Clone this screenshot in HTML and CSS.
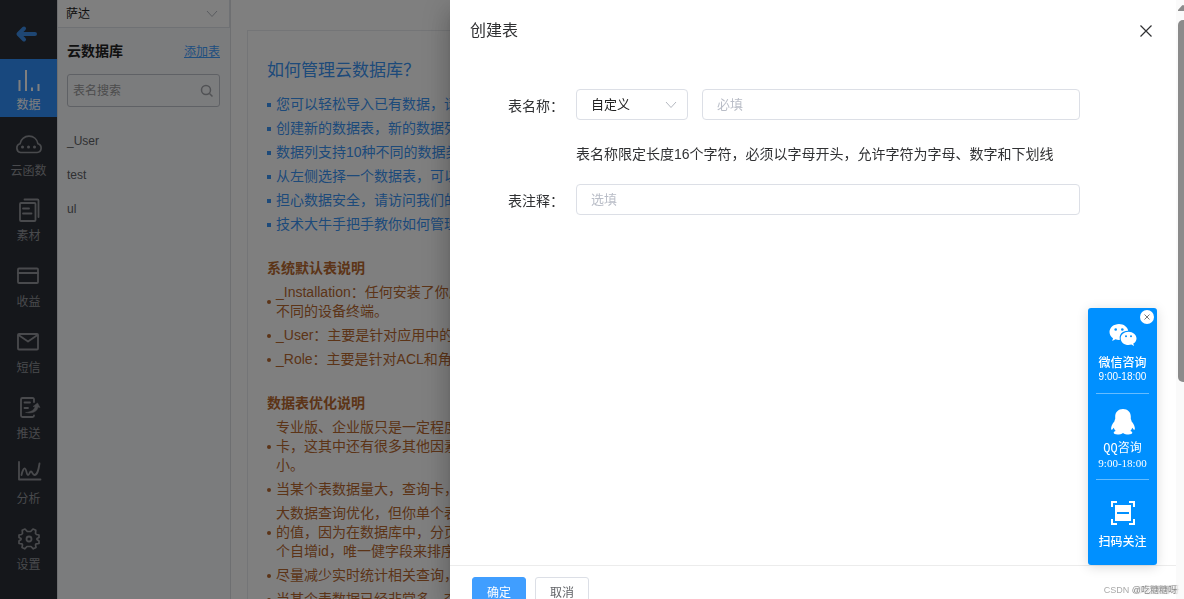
FILE: index.html
```
<!DOCTYPE html>
<html lang="zh-CN">
<head>
<meta charset="utf-8">
<title>云数据库</title>
<link rel="stylesheet" href="styles.css">
</head>
<body>
<div class="app">
  <nav class="rail">
    <button class="back" type="button" aria-label="返回">
      <svg width="57" height="24" viewBox="0 0 57 24"><path d="M35 12H19M24 6.500L18.500 12L24 17.500" stroke-width="4"/></svg>
    </button>
    <div class="rail-list">
      <a class="rail-item active" href="#"><svg width="57" height="24" viewBox="0 0 57 24"><path d="M19.500 11V22M26 1V22M32 18.500V22M38.500 15V22" stroke-width="2" stroke-linecap="butt"/></svg><span>数据</span></a>
      <a class="rail-item" href="#"><svg width="57" height="24" viewBox="0 0 57 24"><path d="M20.500 17.500A4.500 4.500 0 0 1 20 8.800C20.600 4.500 24.500 1.200 29 1.200C33.600 1.200 37.200 4.300 37.900 8.700A4.500 4.500 0 0 1 37 17.500Z" stroke-width="1.700"/><path d="M22.500 12h.01M28.500 12h.01M34.500 12h.01" stroke-width="3"/></svg><span>云函数</span></a>
      <a class="rail-item" href="#"><svg width="57" height="24" viewBox="0 0 57 24"><rect x="20" y="3" width="15.500" height="18" rx="1"/><path d="M24.500 -.500H37.500Q38.500 -.500 38.500 .500V17M23 8.500H29M23 13.500H31.500"/></svg><span>素材</span></a>
      <a class="rail-item" href="#"><svg width="57" height="24" viewBox="0 0 57 24"><rect x="18" y="2.500" width="20" height="14.500" rx="1"/><path d="M18 7H38" stroke-width="2"/></svg><span>收益</span></a>
      <a class="rail-item" href="#"><svg width="57" height="24" viewBox="0 0 57 24"><rect x="18" y="2" width="20" height="15.500" rx="1"/><path d="M18.500 3L28 9.500L37.500 3"/></svg><span>短信</span></a>
      <a class="rail-item" href="#"><svg width="57" height="24" viewBox="0 0 57 24"><path d="M34 4V1.500Q34 0 32.500 0H22.500Q21 0 21 1.500V17.500Q21 19 22.500 19H32.500Q34 19 34 17.500M24.500 4.500H30M24.500 10H28"/><path class="solid" d="M26 14.500C31 14 34.500 12 35 8.500L33 8.500L37.500 5L40 9.500L38 9C37.500 13.500 32 16 26 14.500Z" stroke-width=".500"/></svg><span>推送</span></a>
      <a class="rail-item" href="#"><svg width="57" height="24" viewBox="0 0 57 24"><path d="M19 -1V16.500H40.500M21.500 12C22.500 7 24 5 25 5.500C26.500 6 26.500 12 28 12C29.500 12 29.500 8.500 31 8.500C32.500 8.500 32.500 12 34.500 12C37.500 12 38.500 7 39.500 .500"/></svg><span>分析</span></a>
      <a class="rail-item" href="#"><svg width="57" height="24" viewBox="0 0 57 24"><path d="M27.300 2.500L30.700 2.500L33 0L35.800 1.200L35.500 4.500L36.500 5.500L39 6L39 8.500L37 9.500L37 10.500L39 12L39 14.500L36 14.800L35.500 15.800L36 18.500L33.300 19.800L31 17.500H27L24.700 19.800L22 18.500L22.500 15.800L22 14.800L19 14.500L19 12L21 10.500V9.500L19 8.500V6L21.500 5.500L22.500 4.500L22.200 1.200L25 0Z" stroke-width="1.700"/><circle cx="29" cy="10" r="2.500"/></svg><span>设置</span></a>
    </div>
  </nav>

  <aside class="tables">
    <div class="app-picker">
      <select aria-label="应用"><option>萨达</option></select>
      <svg class="chevron" width="12" height="8" viewBox="0 0 12 8"><path d="M1 1L6 6.500L11 1"/></svg>
    </div>
    <div class="tables-head"><h2>云数据库</h2><a href="#">添加表</a></div>
    <div class="search">
      <input type="text" placeholder="表名搜索" aria-label="表名搜索">
      <svg width="14" height="14" viewBox="0 0 14 14"><circle cx="6" cy="6" r="4.500"/><path d="M9.500 9.500L12.500 12.500"/></svg>
    </div>
    <ul class="table-list"><li>_User</li><li>test</li><li>ul</li></ul>
  </aside>

  <main class="content">
    <article class="card">
      <h1>如何管理云数据库？</h1>
      <ul class="tips">
        <li><span>您可以轻松导入已有数据，请</span></li>
        <li><span>创建新的数据表，新的数据列</span></li>
        <li><span>数据列支持10种不同的数据类</span></li>
        <li><span>从左侧选择一个数据表，可以</span></li>
        <li><span>担心数据安全，请访问我们的</span></li>
        <li><span>技术大牛手把手教你如何管理</span></li>
      </ul>
      <h3>系统默认表说明</h3>
      <ul class="notes">
        <li><span>_Installation：任何安装了你应<br>不同的设备终端。</span></li>
        <li><span>_User：主要是针对应用中的用</span></li>
        <li><span>_Role：主要是针对ACL和角色</span></li>
      </ul>
      <h3>数据表优化说明</h3>
      <ul class="notes">
        <li><span>专业版、企业版只是一定程度<br>卡，这其中还有很多其他因素<br>小。</span></li>
        <li><span>当某个表数据量大，查询卡，</span></li>
        <li><span>大数据查询优化，但你单个表<br>的值，因为在数据库中，分页<br>个自增id，唯一健字段来排序</span></li>
        <li><span>尽量减少实时统计相关查询，</span></li>
        <li><span>当某个表数据已经非常多，查</span></li>
      </ul>
    </article>
  </main>
</div>

<div class="mask"></div>

<section class="drawer" role="dialog" aria-labelledby="drawer-title">
  <div class="drawer-main">
    <header class="drawer-head">
      <h2 id="drawer-title">创建表</h2>
      <button type="button" aria-label="关闭"><svg width="14" height="14" viewBox="0 0 14 14"><path d="M1.500 1.500L12.500 12.500M12.500 1.500L1.500 12.500"/></svg></button>
    </header>
    <form class="form" id="create-form">
      <div class="row">
        <label for="table-name">表名称：</label>
        <div class="fields">
          <div class="kind">
            <select aria-label="类型"><option>自定义</option></select>
            <svg class="chevron" width="12" height="8" viewBox="0 0 12 8"><path d="M1 1L6 6.500L11 1"/></svg>
          </div>
          <input id="table-name" type="text" placeholder="必填">
        </div>
      </div>
      <p class="hint">表名称限定长度16个字符，必须以字母开头，允许字符为字母、数字和下划线</p>
      <div class="row">
        <label for="table-note">表注释：</label>
        <div class="fields"><input id="table-note" type="text" placeholder="选填"></div>
      </div>
    </form>
    <footer class="drawer-foot">
      <button class="btn primary" type="submit" form="create-form">确定</button>
      <button class="btn" type="button">取消</button>
    </footer>
  </div>
  <div class="scroll">
    <svg width="12" height="6" viewBox="0 0 12 6"><path d="M0 6V5L4 .500Q5 -.500 6 .500L10 5V6Z"/></svg>
    <div class="thumb"></div>
  </div>
</section>

<aside class="contact">
  <button class="contact-close" type="button" aria-label="关闭"><svg width="14" height="14" viewBox="0 0 14 14"><path d="M4.500 4.500L9.500 9.500M9.500 4.500L4.500 9.500"/></svg></button>
  <a class="contact-item" href="#">
    <svg width="28" height="24" viewBox="0 0 28 24"><path d="M10 1C4.700 1 .500 4.600 .500 9C.500 11.500 1.800 13.700 4 15.200L3.200 18L6.500 16.300C7.600 16.700 8.800 16.900 10 16.900C10.400 16.900 10.700 16.900 11 16.800C9.500 11.500 13.500 7.500 19.200 7.700C18.500 3.900 14.700 1 10 1Z"/><path d="M19.500 8.800C15 8.800 11.700 11.800 11.700 15.400C11.700 19 15.200 22 19.500 22C20.500 22 21.500 21.800 22.400 21.500L25 23L24.300 20.600C26.200 19.400 27.500 17.500 27.500 15.400C27.500 11.800 23.900 8.800 19.500 8.800Z"/><g class="eyes"><circle cx="6.700" cy="6.500" r="1.300"/><circle cx="13.300" cy="6.500" r="1.300"/><circle cx="17" cy="13.300" r="1"/><circle cx="22" cy="13.300" r="1"/></g></svg>
    <strong>微信咨询</strong><span class="hours">9:00-18:00</span>
  </a>
  <a class="contact-item serif" href="#">
    <svg width="28" height="28" viewBox="0 0 28 28"><path d="M14 1C9.300 1 6.200 4.300 6.200 8.500L6.200 11C5.800 11.600 5.500 12.300 5.500 13.200C3.200 16 2 18.500 2.100 21C2.200 22.300 3.500 21.800 4.700 19.700C5.100 21 5.800 22 6.700 22.900C5.400 23.300 4.700 24 4.700 24.800C4.700 26.900 11.300 27 14 24.900C16.700 27 23.300 26.900 23.300 24.800C23.300 24 22.600 23.300 21.300 22.900C22.200 22 22.900 21 23.300 19.700C24.500 21.800 25.800 22.300 25.900 21C26 18.500 24.800 16 22.500 13.200C22.500 12.300 22.200 11.600 21.800 11V8.500C21.800 4.300 18.700 1 14 1Z"/></svg>
    <strong>QQ咨询</strong><span class="hours">9:00-18:00</span>
  </a>
  <a class="contact-item" href="#">
    <svg width="24" height="26" viewBox="0 0 24 26"><path d="M0 1H6V3H2V7H0ZM18 1H24V7H22V3H18ZM0 19H2V23H6V25H0ZM22 19H24V25H18V23H22ZM4 5H20V21H4Z"/><path class="slot" d="M6 12H18V14H6Z"/></svg>
    <strong>扫码关注</strong>
  </a>
</aside>
<div class="watermark">CSDN <b>@吃糖糖呀</b></div>
</body>
</html>
```
FILE: styles.css
```
* { box-sizing: border-box; }
html, body { height: 100%; }
body {
  margin: 0;
  overflow: hidden;
  background: #fff;
  color: #303133;
  font: 14px/20px "Liberation Sans", "Noto Sans CJK SC", sans-serif;
}
h1, h2, h3, p, ul { margin: 0; padding: 0; }
ul { list-style: none; }
a { color: inherit; text-decoration: none; }
svg { display: block; flex: none; fill: none; stroke: currentColor; }
button, input, select { font: inherit; margin: 0; }
button { padding: 0; border: 0; background: none; color: inherit; }
select { appearance: none; background: none; }

.app { display: flex; height: 100%; overflow: hidden; }

.rail {
  display: flex;
  flex-direction: column;
  flex: none;
  width: 57px;
  background: #2b2f36;
  color: #92949a;
}
.rail svg { overflow: visible; stroke-width: 1.800px; stroke-linecap: round; stroke-linejoin: round; }
.rail .solid { fill: currentColor; }
.back { display: flex; align-items: center; height: 59px; padding-top: 8px; color: #3c8ce7; }
.rail-list {
  display: flex;
  flex: 1;
  flex-direction: column;
  justify-content: space-between;
  padding-bottom: 22px;
}
.rail-item {
  display: flex;
  flex-direction: column;
  align-items: center;
  gap: 5px;
  height: 58px;
  padding-top: 10px;
  font-size: 12px;
  line-height: 14px;
}
.rail-item.active { background: #3191fd; color: #fff; }

.tables { flex: none; width: 174px; background: #f6f8fb; border: solid #dcdfe3; border-width: 0 1px; }
.app-picker, .kind, .search { position: relative; }
.app-picker { background: #fff; border: solid #dfe2e8; border-width: 0 1px 1px 0; }
.app-picker select { display: block; width: 100%; height: 27px; padding: 0 8px; border: 0; color: #222; font-size: 12px; }
.chevron { position: absolute; top: 50%; right: 11px; transform: translateY(-50%); color: #b4b8c0; pointer-events: none; }
.tables-head { display: flex; justify-content: space-between; align-items: flex-end; padding: 13px 10px 12px 9px; }
.tables-head h2 { font-size: 14px; line-height: 21px; color: #222; }
.tables-head a { color: #409eff; font-size: 12px; text-decoration: underline; }
.search { margin: 0 10px 0 9px; }
.search input {
  display: block;
  width: 100%;
  height: 33px;
  padding: 0 28px 0 5px;
  border: 1px solid #bfc2ca;
  border-radius: 3px;
  background: none;
  font-size: 12px;
}
.search input::placeholder { color: #999; opacity: 1; }
.search svg { position: absolute; top: 10px; right: 6px; color: #a3a5aa; stroke-width: 1.500px; }
.table-list { padding: 17px 9px; color: #606266; font-size: 12px; line-height: 34px; }

.content { flex: 1; min-width: 0; padding: 30px 16px; }
.card { padding: 28px 19px; border: 1px solid #e9ebee; white-space: nowrap; }
.card h1 { margin-bottom: 12px; color: #3a94f5; font-size: 17px; font-weight: 400; line-height: 24px; }
.card ul { display: grid; gap: 5px; line-height: 19px; }
.card li { display: flex; align-items: center; gap: 5px; }
.card li::before { content: ""; flex: none; width: 4px; height: 4px; background: currentColor; }
.tips { color: #3a94f5; }
.notes { color: #b8682f; }
.notes li::before { border-radius: 50%; }
.card h3 { margin: 24px 0 5px; color: #b8682f; font-size: 14px; line-height: 20px; }

.mask { position: fixed; inset: 0; background: rgba(0, 0, 0, .5); }

.drawer {
  position: fixed;
  inset: 0 0 0 38%;
  display: flex;
  background: #fff;
  box-shadow: 0 8px 10px -5px rgba(0, 0, 0, .2), 0 16px 24px 2px rgba(0, 0, 0, .14), 0 6px 30px 5px rgba(0, 0, 0, .12);
}
.drawer-main { display: flex; flex: 1; flex-direction: column; min-width: 0; }
.drawer-head { display: flex; justify-content: space-between; align-items: center; padding: 20px 23px 20px 20px; }
.drawer-head h2 { font-size: 16px; font-weight: 400; line-height: 21px; }
.drawer-head svg { stroke-width: 1.200px; }
.form { display: grid; flex: 1; align-content: start; gap: 20px; padding: 28px 96px 0 0; }
.row { display: flex; align-items: flex-start; }
.row label { flex: none; width: 126px; padding-right: 12px; line-height: 35px; text-align: right; }
.fields { display: flex; flex: 1; gap: 14px; min-width: 0; }
.fields input, .fields select {
  width: 100%;
  height: 31px;
  padding: 0 14px;
  border: 1px solid #dcdfe6;
  border-radius: 4px;
  font-size: 13px;
}
.fields input { flex: 1; min-width: 0; }
.fields input::placeholder { color: #b9bdc7; opacity: 1; }
.fields select { display: block; color: #222; }
.kind { flex: none; width: 112px; }
.kind .chevron { top: 16px; }
.hint { padding-left: 126px; }
.drawer-foot {
  display: flex;
  gap: 9px;
  height: 34px;
  overflow: hidden;
  padding: 11px 22px 0;
  border-top: 1px solid #ececec;
}
.btn { flex: none; width: 54px; height: 31px; border: 1px solid #dcdfe6; border-radius: 3px; color: #606266; font-size: 12px; }
.btn.primary { border-color: #409eff; background: #409eff; color: #fff; }
.scroll { flex: none; width: 8px; overflow: hidden; padding: 5px 0 0 2px; background: #fafafa; }
.scroll svg { fill: #8b8b8b; stroke: none; }
.thumb { width: 12px; height: 61%; margin-top: 9px; border-radius: 5px; background: #8b8b8b; }

.contact {
  position: fixed;
  right: 27px;
  bottom: 34px;
  width: 69px;
  padding: 0 8px;
  border-radius: 3px;
  background: #0090ff;
  box-shadow: 0 2px 12px rgba(0, 0, 0, .15);
  color: #fff;
}
.contact-item { display: flex; flex-direction: column; align-items: center; padding: 15px 0 10px; font-size: 12px; line-height: 16px; }
.contact-item + .contact-item { border-top: 1px solid #66bcff; }
.contact-item strong { margin-top: 8px; font-weight: 500; white-space: nowrap; }
.contact-item svg { fill: #fff; stroke: none; }
.contact-item .eyes, .contact-item .slot { fill: #0090ff; }
.hours { font-size: 10px; line-height: 12px; }
.contact-item.serif { padding: 14px 0 10px; }
.serif strong { margin-top: 5px; font-family: "Liberation Mono", "Noto Sans CJK SC", monospace; font-weight: 400; }
.serif .hours { font-family: "Liberation Serif", serif; font-size: 11px; }
.contact-item:last-child { padding: 20px 0 15px; }
.contact-close { position: absolute; top: 2px; right: 3px; border-radius: 50%; background: #fff; color: #777; }

.watermark { position: fixed; right: 7px; bottom: 2px; color: #aaa; font-size: 9px; line-height: 14px; white-space: nowrap; }
.watermark b { color: #888; font-weight: 400; text-shadow: 2px 0 1px #ccc; }
```
